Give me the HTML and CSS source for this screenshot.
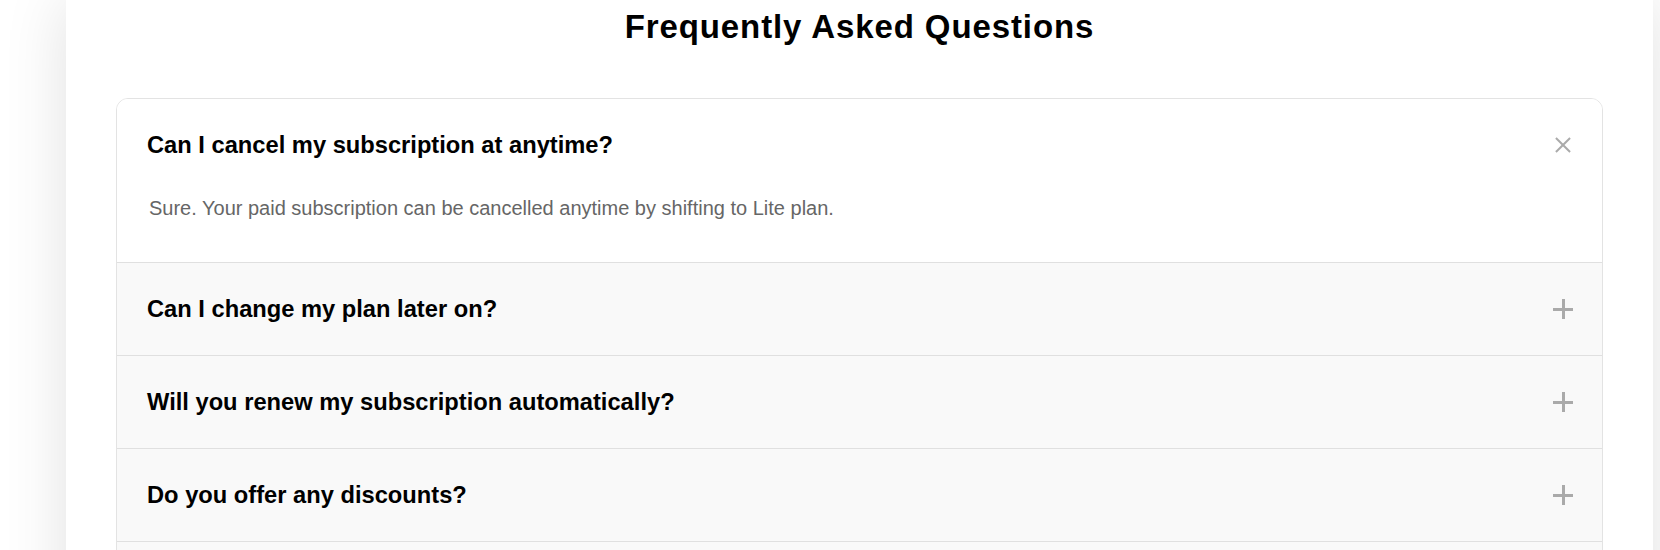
FILE: index.html
```html
<!DOCTYPE html>
<html lang="en">
<head>
  <meta charset="UTF-8">
  <meta name="viewport" content="width=device-width, initial-scale=1.0">
  <title>FAQ</title>
  <link rel="stylesheet" href="styles.css">
</head>
<body>

  <div class="page">
    <h1 class="faq-title">Frequently Asked Questions</h1>

    <!-- FAQ LIST -->
    <div class="faq-list">
      <div class="faq-item open">
        <div class="faq-question">
          <span>Can I cancel my subscription at anytime?</span>
          <i class="faq-icon"></i>
        </div>
        <div class="faq-answer">Sure. Your paid subscription can be cancelled anytime by shifting to Lite plan.</div>
      </div>

      <div class="faq-item">
        <div class="faq-question">
          <span>Can I change my plan later on?</span>
          <i class="faq-icon"></i>
        </div>
      </div>

      <div class="faq-item">
        <div class="faq-question">
          <span>Will you renew my subscription automatically?</span>
          <i class="faq-icon"></i>
        </div>
      </div>

      <div class="faq-item">
        <div class="faq-question">
          <span>Do you offer any discounts?</span>
          <i class="faq-icon"></i>
        </div>
      </div>

      <div class="faq-item">
        <div class="faq-question">
          <span>What payment methods do you accept?</span>
          <i class="faq-icon"></i>
        </div>
      </div>
    </div>
  </div>

</body>
</html>
```

FILE: styles.css
```css
body, html {
  margin: 0;
  padding: 0;
  background: #fff;
  font-family: "Liberation Sans", Arial, Helvetica, sans-serif;
  color: #000;
  overflow: hidden;
}

.page {
  margin-left: 66px;
  width: 1587px;
  min-height: 900px;
  box-sizing: border-box;
  padding: 8px 50px 0;
  background: #fff;
  box-shadow: 0 0 60px rgba(0,0,0,0.12);
}

.faq-title {
  margin: 0 0 52px;
  font-size: 33px;
  letter-spacing: 0.9px;
  font-weight: bold;
  text-align: center;
}

.faq-list {
  border: 1px solid #e3e3e3;
  border-radius: 12px;
  overflow: hidden;
}

.faq-item {
  background: #f9f9f9;
  border-top: 1px solid #e0e0e0;
}

.faq-item:first-child {
  border-top: none;
}

.faq-item.open {
  background: #fff;
}

.faq-question {
  display: flex;
  align-items: center;
  justify-content: space-between;
  height: 92px;
  padding: 0 29px 0 30px;
  font-size: 23.7px;
  font-weight: bold;
  cursor: pointer;
}

.faq-icon {
  position: relative;
  width: 20px;
  height: 20px;
  flex-shrink: 0;
}

.faq-icon::before,
.faq-icon::after {
  content: "";
  position: absolute;
  background: #aaa;
}

.faq-icon::before {
  left: 0;
  top: 8.5px;
  width: 20px;
  height: 3px;
}

.faq-icon::after {
  top: 0;
  left: 8.5px;
  width: 3px;
  height: 20px;
}

.faq-item.open .faq-icon {
  transform: rotate(45deg);
}

.faq-item.open .faq-icon::before {
  top: 8.75px;
  height: 2.5px;
}

.faq-item.open .faq-icon::after {
  left: 8.75px;
  width: 2.5px;
}

.faq-answer {
  padding: 6px 32px 42px;
  font-size: 20px;
  color: #666;
}
```
